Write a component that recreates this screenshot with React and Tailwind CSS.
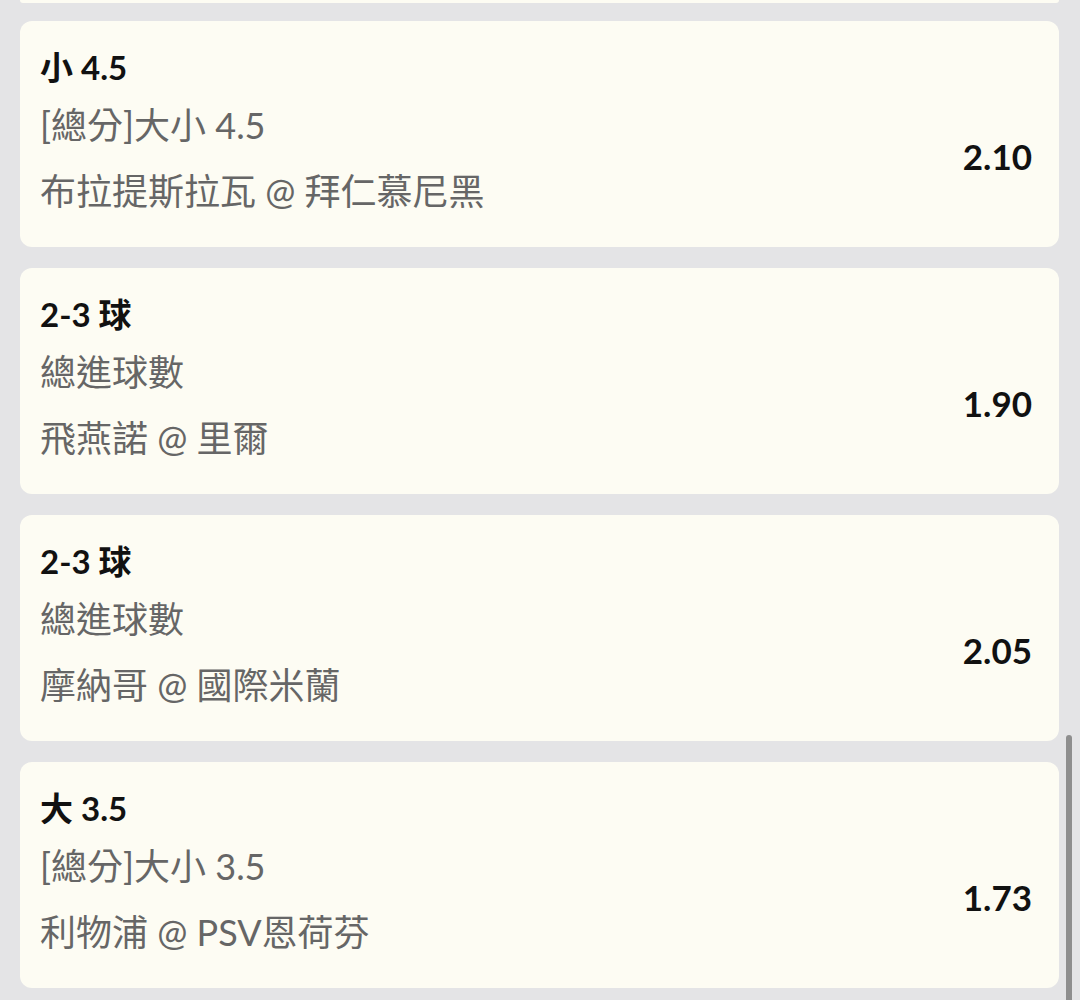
const bets = [
  { pick: '小 4.5', market: '[總分]大小 4.5', match: '布拉提斯拉瓦 @ 拜仁慕尼黑', odds: '2.10' },
  { pick: '2-3 球', market: '總進球數', match: '飛燕諾 @ 里爾', odds: '1.90' },
  { pick: '2-3 球', market: '總進球數', match: '摩納哥 @ 國際米蘭', odds: '2.05' },
  { pick: '大 3.5', market: '[總分]大小 3.5', match: '利物浦 @ PSV恩荷芬', odds: '1.73' },
]

function BetCard({ bet }) {
  return (
    <div className="flex h-[226px] shrink-0 rounded-[12px] bg-[#fdfcf3] pl-[20px] pr-[27px]">
      <div className="flex flex-1 flex-col">
        <div className="mt-[26px] text-[33px] font-bold leading-[40px] text-[#111111]">{bet.pick}</div>
        <div className="mt-[16px] text-[36px] leading-[44px] text-[#666666]">{bet.market}</div>
        <div className="mt-[22px] text-[36px] leading-[44px] text-[#666666]">{bet.match}</div>
      </div>
      <div className="mt-[44px] self-center text-[35px] font-bold leading-[40px] text-[#111111]">{bet.odds}</div>
    </div>
  )
}

export default function App() {
  return (
    <div
      className="relative h-[1000px] w-[1080px] overflow-hidden bg-[#e4e4e6]"
      style={{ fontFamily: "Lato, 'Noto Sans CJK TC', sans-serif" }}
    >
      <div className="flex flex-col gap-[21px] px-[20px] pr-[21px]">
        <div className="-mb-[3px] h-[3px] rounded-b-[12px] bg-[#fdfcf3]" />
        {bets.map((bet, i) => (
          <BetCard key={i} bet={bet} />
        ))}
      </div>
      <div className="absolute left-[1066px] top-[735px] h-[300px] w-[6px] rounded-full bg-[#8e8e8e]" />
    </div>
  )
}
